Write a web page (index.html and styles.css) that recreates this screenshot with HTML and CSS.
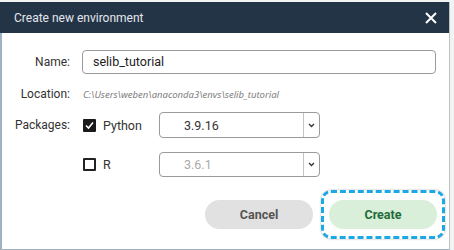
FILE: index.html
```html
<!DOCTYPE html>
<html lang="en">

<head>
    <meta charset="UTF-8">
    <meta name="viewport" content="width=device-width, initial-scale=1.0">
    <title>Create new environment</title>
    <link rel="stylesheet" href="styles.css">
</head>

<body>
    <div class="dialog">
        <div class="dialog-header">
            <span class="dialog-title">Create new environment</span>
            <svg class="close-icon" width="12" height="12" viewBox="0 0 12 12">
                <path d="M1 1 L11 11 M11 1 L1 11" stroke="#ffffff" stroke-width="2" fill="none" />
            </svg>
        </div>

        <div class="dialog-body">
            <div class="form-row">
                <label class="form-label">Name:</label>
                <div class="text-input">selib_tutorial</div>
            </div>

            <div class="form-row location-row">
                <label class="form-label">Location:</label>
                <span class="location-path">C:\Users\weben\anaconda3\envs\selib_tutorial</span>
            </div>

            <div class="form-row package-row">
                <label class="form-label">Packages:</label>
                <div class="package">
                    <span class="checkbox checked">
                        <svg width="9" height="9" viewBox="0 0 9 9">
                            <path d="M1 4.5 L3.5 7 L8 1.5" stroke="#ffffff" stroke-width="1.6" fill="none" />
                        </svg>
                    </span>
                    <span class="package-name">Python</span>
                </div>
                <div class="select">
                    <span class="select-value">3.9.16</span>
                    <span class="select-arrow">
                        <svg width="7" height="5" viewBox="0 0 7 5">
                            <path d="M1 1 L3.5 3.5 L6 1" stroke="#333" stroke-width="1.3" fill="none" />
                        </svg>
                    </span>
                </div>
            </div>

            <div class="form-row package-row r-row">
                <span class="form-label"></span>
                <div class="package">
                    <span class="checkbox"></span>
                    <span class="package-name">R</span>
                </div>
                <div class="select disabled">
                    <span class="select-value">3.6.1</span>
                    <span class="select-arrow">
                        <svg width="7" height="5" viewBox="0 0 7 5">
                            <path d="M1 1 L3.5 3.5 L6 1" stroke="#333" stroke-width="1.3" fill="none" />
                        </svg>
                    </span>
                </div>
            </div>

            <div class="dialog-actions">
                <button class="btn cancel-btn">Cancel</button>
                <div class="focus-ring">
                    <button class="btn create-btn">Create</button>
                </div>
            </div>
        </div>
    </div>
</body>

</html>
```

FILE: styles.css
```css
* {
    margin: 0;
    padding: 0;
    box-sizing: border-box;
    font-family: Roboto, 'Noto Sans', sans-serif;
}

body {
    background: #f2f3f3;
    width: 454px;
    height: 250px;
    overflow: hidden;
}

.dialog {
    width: 450px;
    height: 249px;
    margin-top: 2px;
    background: #ffffff;
    border-left: 2px solid #9fb2c2;
    border-bottom: 2px solid #9fb2c2;
    border-right: 1px solid #b9c2c9;
    display: flex;
    flex-direction: column;
}

.dialog-header {
    height: 31px;
    margin-left: -2px;
    background: #243447;
    display: flex;
    align-items: center;
    justify-content: space-between;
    padding: 0 12px 0 14px;
}

.dialog-title {
    color: #e3e7eb;
    font-size: 12px;
}

.close-icon {
    margin-top: 1px;
}

.dialog-body {
    flex: 1;
    padding: 17px 13px 0 0;
    display: flex;
    flex-direction: column;
}

.form-row {
    display: grid;
    grid-template-columns: 68px 1fr;
    column-gap: 12px;
    align-items: center;
}

.form-label {
    text-align: right;
    font-size: 12px;
    color: #333;
}

.text-input {
    height: 24px;
    border: 1px solid #9a9a9a;
    border-radius: 4px;
    padding: 0 10px;
    font-size: 12.5px;
    color: #222;
    line-height: 22px;
}

.location-row {
    margin-top: 10px;
    height: 20px;
}

.location-path {
    font-family: 'Noto Sans', sans-serif;
    font-size: 9.5px;
    font-style: italic;
    color: #808080;
    padding-left: 1px;
}

.package-row {
    grid-template-columns: 68px 65px 161px;
    margin-top: 8px;
}

.r-row {
    margin-top: 14px;
}

.package {
    display: flex;
    align-items: center;
    gap: 7px;
    padding-left: 1px;
}

.checkbox {
    width: 13px;
    height: 13px;
    border: 2px solid #222;
    border-radius: 1px;
    display: flex;
    align-items: center;
    justify-content: center;
}

.checkbox.checked {
    background: #1a1a1a;
    border-color: #1a1a1a;
}

.package-name {
    font-size: 12.5px;
    color: #333;
}

.select {
    height: 26px;
    border: 1px solid #9a9a9a;
    border-radius: 4px;
    display: flex;
    align-items: center;
}

.r-row .select {
    height: 25px;
}

.select-value {
    flex: 1;
    padding-left: 24px;
    font-size: 12.5px;
    color: #333;
}

.select.disabled .select-value {
    color: #aaaaaa;
}

.select-arrow {
    width: 16px;
    height: 100%;
    border-left: 1px solid #c4c4c4;
    display: flex;
    align-items: center;
    justify-content: center;
}

.dialog-actions {
    margin-top: 13px;
    display: flex;
    justify-content: flex-end;
    align-items: center;
    gap: 8px;
}

.btn {
    width: 108px;
    height: 29px;
    border: none;
    border-radius: 15px;
    font-size: 12.5px;
    font-weight: 700;
}

.cancel-btn {
    background: #e1e1e1;
    color: #555;
}

.focus-ring {
    padding: 7px 5px;
    border: 3px dashed #1ca8e4;
    border-radius: 10px;
    box-shadow: 0 0 2px rgba(0, 0, 0, 0.35);
    margin-right: -9px;
}

.create-btn {
    background: #d9efd9;
    color: #1f6b3a;
}
```
